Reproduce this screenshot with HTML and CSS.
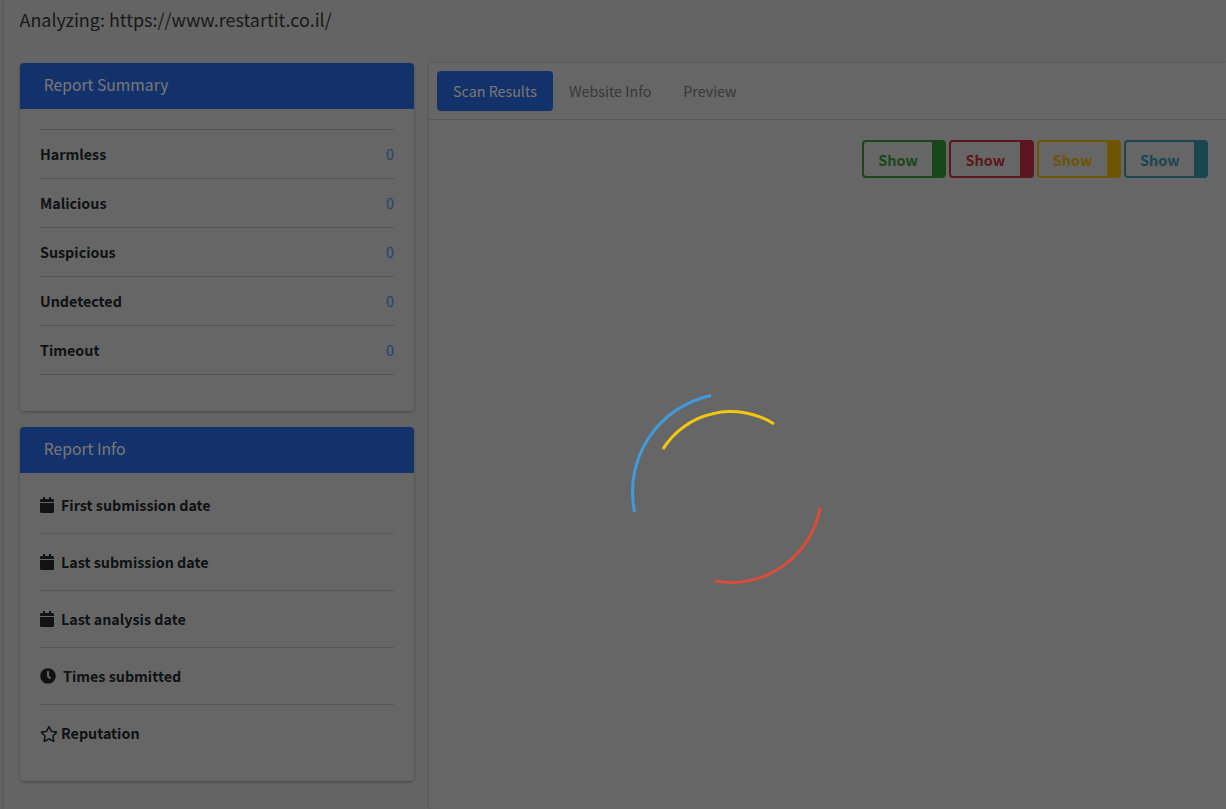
FILE: index.html
```html
<!DOCTYPE html>
<html lang="en">
<head>
    <meta charset="UTF-8">
    <meta name="viewport" content="width=device-width, initial-scale=1.0">
    <title>Website Report</title>
    <link rel="stylesheet" href="styles.css">
</head>
<body>

    <div class="wrapper">
        <h1 class="page-title">Analyzing: https://www.restartit.co.il/</h1>

        <div class="layout">
            <!-- Left column -->
            <div class="side">
                <section class="card">
                    <h2 class="card-header">Report Summary</h2>
                    <ul class="summary">
                        <li><b>Harmless</b><span class="count">0</span></li>
                        <li><b>Malicious</b><span class="count">0</span></li>
                        <li><b>Suspicious</b><span class="count">0</span></li>
                        <li><b>Undetected</b><span class="count">0</span></li>
                        <li><b>Timeout</b><span class="count">0</span></li>
                    </ul>
                </section>

                <section class="card">
                    <h2 class="card-header">Report Info</h2>
                    <ul class="info">
                        <li>
                            <svg class="icon icon-calendar" viewBox="0 0 448 512"><path d="M12 192h424c6.600 0 12 5.400 12 12v260c0 26.500-21.500 48-48 48H48c-26.500 0-48-21.500-48-48V204c0-6.600 5.400-12 12-12zm436-44v-36c0-26.500-21.500-48-48-48h-48V12c0-6.600-5.400-12-12-12h-40c-6.600 0-12 5.400-12 12v52H160V12c0-6.600-5.400-12-12-12h-40c-6.600 0-12 5.400-12 12v52H48C21.500 64 0 85.500 0 112v36c0 6.600 5.400 12 12 12h424c6.600 0 12-5.400 12-12z"/></svg>
                            <b>First submission date</b>
                        </li>
                        <li>
                            <svg class="icon icon-calendar" viewBox="0 0 448 512"><path d="M12 192h424c6.600 0 12 5.400 12 12v260c0 26.500-21.500 48-48 48H48c-26.500 0-48-21.500-48-48V204c0-6.600 5.400-12 12-12zm436-44v-36c0-26.500-21.500-48-48-48h-48V12c0-6.600-5.400-12-12-12h-40c-6.600 0-12 5.400-12 12v52H160V12c0-6.600-5.400-12-12-12h-40c-6.600 0-12 5.400-12 12v52H48C21.500 64 0 85.500 0 112v36c0 6.600 5.400 12 12 12h424c6.600 0 12-5.400 12-12z"/></svg>
                            <b>Last submission date</b>
                        </li>
                        <li>
                            <svg class="icon icon-calendar" viewBox="0 0 448 512"><path d="M12 192h424c6.600 0 12 5.400 12 12v260c0 26.500-21.500 48-48 48H48c-26.500 0-48-21.500-48-48V204c0-6.600 5.400-12 12-12zm436-44v-36c0-26.500-21.500-48-48-48h-48V12c0-6.600-5.400-12-12-12h-40c-6.600 0-12 5.400-12 12v52H160V12c0-6.600-5.400-12-12-12h-40c-6.600 0-12 5.400-12 12v52H48C21.500 64 0 85.500 0 112v36c0 6.600 5.400 12 12 12h424c6.600 0 12-5.400 12-12z"/></svg>
                            <b>Last analysis date</b>
                        </li>
                        <li>
                            <svg class="icon icon-clock" viewBox="0 0 512 512"><path d="M256,8C119,8,8,119,8,256S119,504,256,504,504,393,504,256,393,8,256,8Zm92.490,313h0l-20,25a16,16,0,0,1-22.490,2.500h0l-67-49.720a40,40,0,0,1-15-31.230V112a16,16,0,0,1,16-16h32a16,16,0,0,1,16,16V256l58,42.500A16,16,0,0,1,348.490,321Z"/></svg>
                            <b>Times submitted</b>
                        </li>
                        <li>
                            <svg class="icon icon-star" viewBox="0 0 576 512"><path d="M528.100 171.500L382 150.200 316.700 17.800c-11.700-23.600-45.600-23.900-57.400 0L194 150.200 47.900 171.500c-26.200 3.800-36.700 36.100-17.700 54.600l105.700 103-25 145.500c-4.500 26.300 23.200 46 46.400 33.700L288 439.600l130.700 68.700c23.200 12.200 50.900-7.400 46.400-33.700l-25-145.500 105.700-103c19-18.500 8.500-50.800-17.700-54.600zM388.600 312.300l23.700 138.400L288 385.400l-124.300 65.300 23.700-138.400-100.600-98 139-20.200 62.200-126 62.200 126 139 20.200-100.600 98z"/></svg>
                            <b>Reputation</b>
                        </li>
                    </ul>
                </section>
            </div>

            <!-- Right column -->
            <section class="results">
                <nav class="tabs">
                    <a class="tab active" href="#">Scan Results</a>
                    <a class="tab" href="#">Website Info</a>
                    <a class="tab" href="#">Preview</a>
                </nav>
                <div class="filters">
                    <button class="filter green" type="button">Show</button>
                    <button class="filter red" type="button">Show</button>
                    <button class="filter yellow" type="button">Show</button>
                    <button class="filter teal" type="button">Show</button>
                </div>
            </section>
        </div>
    </div>

    <!-- Page is dimmed while the scan loads -->
    <div class="overlay">
        <div class="loader"></div>
    </div>

</body>
</html>
```

FILE: styles.css
```css
* {
    box-sizing: border-box;
}

html, body {
    height: 100%;
}

body {
    font-family: 'Noto Sans CJK SC', 'Noto Sans', sans-serif;
    background-color: #c4c4c4;
    color: #212529;
    margin: 0;
    overflow: hidden;
}

.wrapper {
    height: 100%;
    margin-left: 4px;
    padding: 0 0 0 16px;
    background-color: #c9c9c9;
    box-shadow: 0 0 3px rgba(0, 0, 0, 0.2);
}

.page-title {
    font-size: 17.95px;
    font-weight: 400;
    line-height: 39px;
    height: 63px;
    margin: 0 0 0 -0.5px;
    color: #333;
}

.layout {
    display: flex;
    align-items: stretch;
    height: 746px;
}

.side {
    width: 394px;
    flex: none;
    display: flex;
    flex-direction: column;
    gap: 16px;
}

.card {
    background-color: #ccc;
    border-radius: 4px;
    box-shadow: 0 1px 3px rgba(0, 0, 0, 0.3);
    overflow: hidden;
}

.card-header {
    height: 46px;
    margin: 0;
    padding: 0 23.7px;
    background-color: #2662d4;
    color: #eee;
    font-size: 15.7px;
    font-weight: 400;
    line-height: 43px;
}

ul {
    list-style: none;
    margin: 0;
}

b {
    font-weight: 700;
}

.summary {
    padding: 20px 20px 36px;
    font-size: 14.3px;
}

.summary li {
    display: flex;
    justify-content: space-between;
    align-items: center;
    height: 49px;
    padding-bottom: 2px;
    border-top: 1px solid #a8a8a8;
}

.summary li:last-child {
    height: 50px;
    border-bottom: 1px solid #a8a8a8;
}

.count {
    color: #4a7fe0;
}

.info {
    padding: 4px 20px 19px;
    font-size: 14.3px;
}

.info li {
    display: flex;
    align-items: center;
    height: 57px;
    padding-bottom: 2px;
    border-bottom: 1px solid #adadad;
}

.info li:last-child {
    border-bottom: none;
}

.icon {
    flex: none;
    height: 16px;
    margin-top: 2px;
    fill: #212529;
}

.icon-calendar {
    width: 14px;
    margin-right: 7px;
}

.icon-clock {
    width: 16px;
    margin-right: 7px;
}

.icon-star {
    width: 18px;
    margin-right: 3px;
}

.results {
    flex: 1;
    margin-left: 15px;
    background-color: #ccc;
    border-radius: 4px 0 0 4px;
    box-shadow: 0 0 3px rgba(0, 0, 0, 0.25);
}

.tabs {
    display: flex;
    height: 57px;
    padding: 8px 8px 0;
    border-bottom: 1px solid #b0b0b0;
}

.tab {
    height: 40px;
    padding: 0 16px;
    border-radius: 4px;
    color: #707070;
    font-size: 14.3px;
    line-height: 40px;
    text-decoration: none;
}

.tab.active {
    width: 116px;
    background-color: #2662d4;
    color: #eee;
}

.filters {
    display: flex;
    justify-content: flex-end;
    gap: 3px;
    padding: 20px 18px 0 0;
}

.filter {
    width: 84.25px;
    height: 38px;
    padding: 0;
    border: 2px solid;
    border-right-width: 14px;
    border-radius: 4px;
    background: transparent;
    font-family: inherit;
    font-size: 14.4px;
    font-weight: 700;
}

.green { color: #358f35; border-color: #358f35; }
.red { color: #b82c40; border-color: #b82c40; }
.yellow { color: #dcaa00; border-color: #dcaa00; }
.teal { color: #348ca0; border-color: #348ca0; }

.overlay {
    position: fixed;
    top: 0;
    left: 0;
    right: 0;
    bottom: 0;
    background-color: rgba(0, 0, 0, 0.5);
}

.loader {
    position: absolute;
    top: 392px;
    left: 630.5px;
    width: 200px;
    height: 200px;
    border: 3px solid transparent;
    border-top-color: #3f9ade;
    border-radius: 50%;
    transform: rotate(-56.7deg);
}

.loader::before,
.loader::after {
    content: "";
    position: absolute;
    border: 3px solid transparent;
    border-radius: 50%;
}

.loader::before {
    top: 5px;
    left: 5px;
    right: 5px;
    bottom: 5px;
    border-top-color: #db4c3a;
    transform: rotate(201.7deg);
}

.loader::after {
    top: 15px;
    left: 15px;
    right: 15px;
    bottom: 15px;
    border-top-color: #f2c80f;
    transform: rotate(44deg);
}
```
